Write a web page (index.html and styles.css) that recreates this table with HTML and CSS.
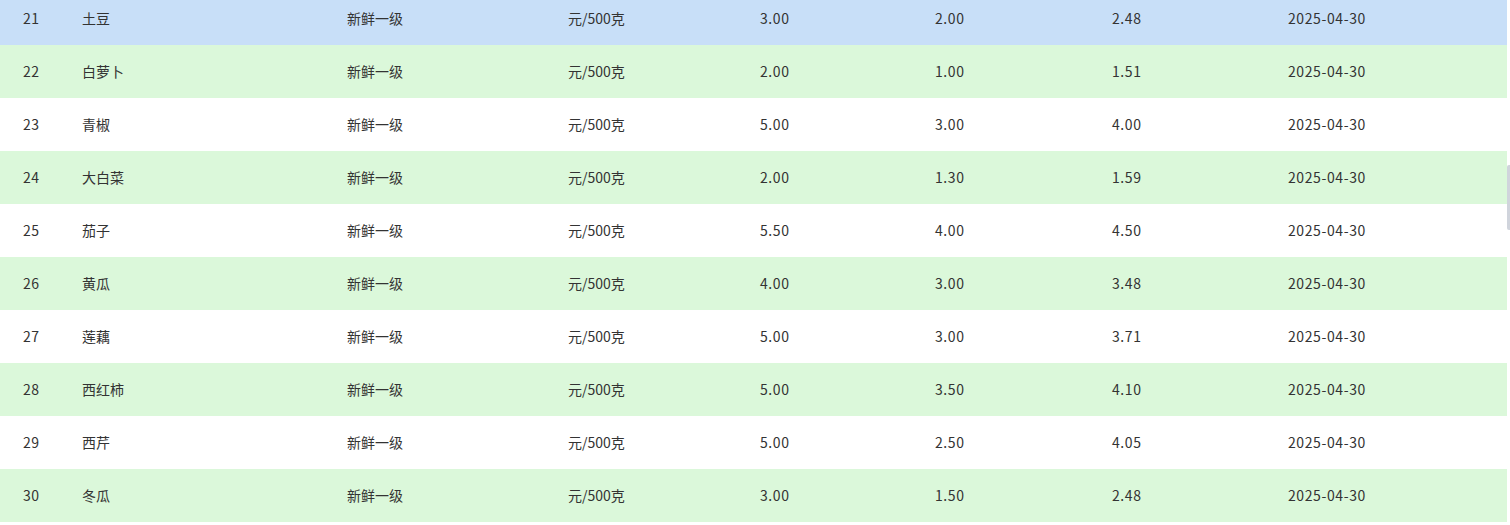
FILE: index.html
```html
<!DOCTYPE html>
<html lang="zh-CN">
<head>
<meta charset="utf-8">
<title>蔬菜价格</title>
<link rel="stylesheet" href="styles.css">
</head>
<body>
<div class="viewport">
  <div class="table">
    <div class="row hover"><span class="c no">21</span><span class="c">土豆</span><span class="c">新鲜一级</span><span class="c">元/500克</span><span class="c num">3.00</span><span class="c num">2.00</span><span class="c num">2.48</span><span class="c num">2025-04-30</span></div>
    <div class="row green"><span class="c no">22</span><span class="c">白萝卜</span><span class="c">新鲜一级</span><span class="c">元/500克</span><span class="c num">2.00</span><span class="c num">1.00</span><span class="c num">1.51</span><span class="c num">2025-04-30</span></div>
    <div class="row"><span class="c no">23</span><span class="c">青椒</span><span class="c">新鲜一级</span><span class="c">元/500克</span><span class="c num">5.00</span><span class="c num">3.00</span><span class="c num">4.00</span><span class="c num">2025-04-30</span></div>
    <div class="row green"><span class="c no">24</span><span class="c">大白菜</span><span class="c">新鲜一级</span><span class="c">元/500克</span><span class="c num">2.00</span><span class="c num">1.30</span><span class="c num">1.59</span><span class="c num">2025-04-30</span></div>
    <div class="row"><span class="c no">25</span><span class="c">茄子</span><span class="c">新鲜一级</span><span class="c">元/500克</span><span class="c num">5.50</span><span class="c num">4.00</span><span class="c num">4.50</span><span class="c num">2025-04-30</span></div>
    <div class="row green"><span class="c no">26</span><span class="c">黄瓜</span><span class="c">新鲜一级</span><span class="c">元/500克</span><span class="c num">4.00</span><span class="c num">3.00</span><span class="c num">3.48</span><span class="c num">2025-04-30</span></div>
    <div class="row"><span class="c no">27</span><span class="c">莲藕</span><span class="c">新鲜一级</span><span class="c">元/500克</span><span class="c num">5.00</span><span class="c num">3.00</span><span class="c num">3.71</span><span class="c num">2025-04-30</span></div>
    <div class="row green"><span class="c no">28</span><span class="c">西红柿</span><span class="c">新鲜一级</span><span class="c">元/500克</span><span class="c num">5.00</span><span class="c num">3.50</span><span class="c num">4.10</span><span class="c num">2025-04-30</span></div>
    <div class="row"><span class="c no">29</span><span class="c">西芹</span><span class="c">新鲜一级</span><span class="c">元/500克</span><span class="c num">5.00</span><span class="c num">2.50</span><span class="c num">4.05</span><span class="c num">2025-04-30</span></div>
    <div class="row green"><span class="c no">30</span><span class="c">冬瓜</span><span class="c">新鲜一级</span><span class="c">元/500克</span><span class="c num">3.00</span><span class="c num">1.50</span><span class="c num">2.48</span><span class="c num">2025-04-30</span></div>
  </div>
  <div class="thumb"></div>
</div>
</body>
</html>
```

FILE: styles.css
```css
html, body {
  margin: 0;
  padding: 0;
  background: #ffffff;
}
body {
  font-family: "Noto Sans CJK SC", "Noto Sans", sans-serif;
  font-size: 14px;
  color: #333333;
  overflow: hidden;
}
.viewport {
  position: relative;
  width: 1510px;
  height: 525px;
  overflow: hidden;
}
.table {
  width: 1507px;
  margin-top: -8px;
}
.row {
  display: grid;
  grid-template-columns: 82px 265px 221px 192px 175px 177px 176px 1fr;
  height: 53px;
  align-items: center;
  background: #ffffff;
}
.row.green {
  background: #dbf8da;
}
.row.hover {
  background: #c8dff8;
}
.c {
  white-space: nowrap;
  line-height: 20px;
  padding-bottom: 2px;
}
.c.no {
  padding-left: 23px;
  letter-spacing: 0.5px;
}
.c.num {
  letter-spacing: 0.6px;
}
.thumb {
  position: absolute;
  right: 0;
  top: 165px;
  width: 3px;
  height: 65px;
  background: #d0d4dc;
  border-radius: 2px 0 0 2px;
}
```
